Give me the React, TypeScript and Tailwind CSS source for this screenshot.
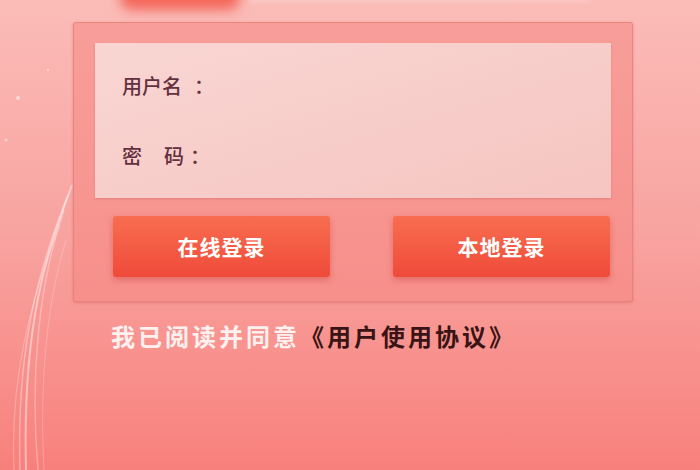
import React from 'react';

const cjk = { fontFamily: '"Noto Sans CJK SC", "Noto Sans", sans-serif' };

// decorative white streaks down the left edge
const Streaks: React.FC = () => (
  <svg className="absolute left-0 top-0 pointer-events-none" width="140" height="470" viewBox="0 0 140 470" fill="none">
    <path d="M72 185 C 48 250, 22 320, 26 470" stroke="rgba(255,255,255,0.45)" strokeWidth="2" />
    <path d="M68 195 C 40 265, 16 345, 20 470" stroke="rgba(255,255,255,0.35)" strokeWidth="1.5" />
    <path d="M64 210 C 38 285, 30 380, 38 470" stroke="rgba(255,255,255,0.3)" strokeWidth="1.5" />
    <path d="M60 225 C 30 300, 10 380, 14 470" stroke="rgba(255,255,255,0.25)" strokeWidth="1.2" />
    <path d="M66 240 C 44 310, 40 400, 44 470" stroke="rgba(255,255,255,0.22)" strokeWidth="1" />
    <circle cx="18" cy="98" r="2" fill="rgba(255,255,255,0.55)" />
    <circle cx="6" cy="140" r="1.5" fill="rgba(255,255,255,0.45)" />
    <circle cx="48" cy="70" r="1.2" fill="rgba(255,255,255,0.4)" />
  </svg>
);

const LoginButton: React.FC<{ label: string }> = ({ label }) => (
  <button className="w-[217px] h-[61px] rounded-[3px] bg-gradient-to-b from-[#f86d4f] to-[#ef4a3a] shadow-[0_3px_6px_rgba(190,40,30,0.35)] text-white text-[21px] font-bold tracking-[1px]">
    {label}
  </button>
);

export default function App() {
  return (
    <div className="relative w-[700px] h-[470px] overflow-hidden bg-gradient-to-b from-[#fbbcb8] via-[#f8a3a0] to-[#f8807c]" style={cjk}>
      <div className="absolute left-[120px] -top-[14px] w-[120px] h-[24px] rounded-full bg-[#f4675c] blur-[6px]" />
      <div className="absolute left-[250px] -top-[3px] w-[340px] h-[6px] bg-[rgba(255,225,225,0.3)] blur-[2px]" />
      <Streaks />

      <div className="relative pt-[22px] pl-[73px]">
        <div className="w-[560px] h-[280px] rounded-[3px] border border-[rgba(220,120,115,0.6)] bg-[rgba(245,135,130,0.55)] shadow-[0_1px_3px_rgba(200,90,85,0.4)] pt-[20px] pl-[21px]">
          <div className="w-[516px] h-[155px] bg-gradient-to-br from-[#f9d6d3] to-[#f5c5c1] shadow-[0_1px_2px_rgba(190,80,75,0.35)] pl-[27px] flex flex-col justify-center gap-[40px] text-[20px] font-medium text-[#633040]">
            <div>
              用户名<span className="ml-[12px]">：</span>
            </div>
            <div>
              密<span className="inline-block w-[22px]" />码<span className="ml-[6px]">：</span>
            </div>
          </div>
          <div className="flex justify-between pl-[18px] pr-[22px] mt-[18px]">
            <LoginButton label="在线登录" />
            <LoginButton label="本地登录" />
          </div>
        </div>
      </div>

      <div className="relative mt-[18px] pl-[111px] text-[24px] font-bold tracking-[3px] leading-[32px]">
        <span className="text-[#fdf1f0]">我已阅读并同意</span>
        <span className="text-[#3a1414]">《用户使用协议》</span>
      </div>
    </div>
  );
}
